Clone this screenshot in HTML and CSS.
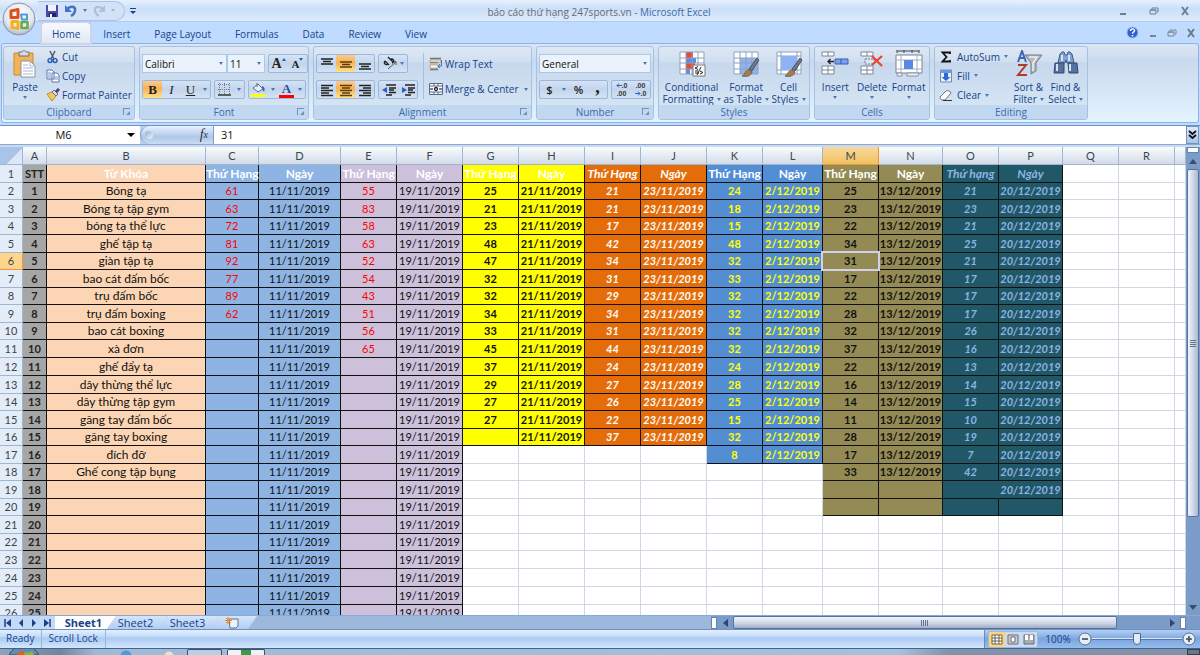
FILE: index.html
```html
<!DOCTYPE html>
<html lang="vi">
<head>
    <meta charset="UTF-8">
    <meta name="viewport" content="width=device-width, initial-scale=1.0">
    <title>báo cáo thứ hạng 247sports.vn - Microsoft Excel</title>
    <link rel="stylesheet" href="styles.css">
</head>
<body>
    <header class="titlebar">
        <button class="office" aria-label="Office Button">
            <svg width="34" height="34" viewBox="0 0 34 34">
                <defs>
                    <radialGradient id="orb" cx="50%" cy="35%" r="65%">
                        <stop offset="0" stop-color="#fff"/>
                        <stop offset=".7" stop-color="#e3e7ef"/>
                        <stop offset="1" stop-color="#a9b4c6"/>
                    </radialGradient>
                </defs>
                <circle cx="17" cy="17" r="16" fill="url(#orb)" stroke="#8793a8"/>
                <g fill="none" stroke-width="3" stroke-linejoin="round">
                    <path d="M16 15.500h-7V9l7-1.500z" stroke="#e0501c"/>
                    <path d="M19 12.500h6v5h-5z" stroke="#4f9be0" stroke-width="2"/>
                    <path d="M10 19.500h6v7l-6-1z" stroke="#f5ae1e"/>
                    <path d="M19.500 20h6v6h-6z" stroke="#6aa84a" stroke-width="2.500"/>
                </g>
            </svg>
        </button>
        <div class="quick">
            <button aria-label="Save">
                <svg width="14" height="14" viewBox="0 0 14 14">
                    <path d="M1 1h12v12H1z" fill="#4a48b0"/>
                    <path d="M3 1h8v6H3z" fill="#eef3ff"/>
                    <path d="M4 9h7v4H4z" fill="#23226e"/>
                    <path d="M5 10h2v3H5z" fill="#fff"/>
                </svg>
            </button>
            <button aria-label="Undo">
                <svg width="14" height="14" viewBox="0 0 14 14">
                    <path d="M3 5c5-4 9-2 8 2-.4 2-2 4-4 5" fill="none" stroke="#4472c8" stroke-width="2.400"/>
                    <path d="M1 1v7h7z" fill="#4472c8"/>
                </svg>
            </button>
            <i class="arrow"></i>
            <button aria-label="Redo">
                <svg width="14" height="14" viewBox="0 0 14 14">
                    <path d="M11 5C6 1 2 3 3 7c.4 2 2 4 4 5" fill="none" stroke="#b3c0d4" stroke-width="2.200"/>
                    <path d="M13 1v7H6z" fill="#b3c0d4"/>
                </svg>
            </button>
            <i class="arrow dim"></i>
        </div>
        <button class="customize" aria-label="Customize Quick Access Toolbar"><i class="arrow dark"></i></button>
        <h1><span>báo cáo thứ hạng 247sports.vn</span> - Microsoft Excel</h1>
        <div class="window-buttons">
            <button aria-label="Minimize"><svg width="10" height="10"><path d="M2 8h6" stroke="#6b7f9c" stroke-width="2"/></svg></button>
            <button aria-label="Restore"><svg width="10" height="10"><path d="M3 3V2h6v4H8M1 4h6v4H1zM1 4h6" fill="none" stroke="#6b7f9c"/></svg></button>
            <button aria-label="Close"><svg width="10" height="10"><path d="M2 1l6 8M8 1L2 9" stroke="#6b7f9c" stroke-width="2"/></svg></button>
        </div>
    </header>

    <nav class="tabs">
        <a class="active" href="#home">Home</a>
        <a href="#insert">Insert</a>
        <a href="#layout">Page Layout</a>
        <a href="#formulas">Formulas</a>
        <a href="#data">Data</a>
        <a href="#review">Review</a>
        <a href="#view">View</a>
        <div class="doc-buttons">
            <button aria-label="Help">
                <svg width="13" height="13" viewBox="0 0 13 13">
                    <circle cx="6.5" cy="6.5" r="5.5" fill="#2f62cf" stroke="#9dbcf2"/>
                    <path d="M4.500 5c0-3 4-2.500 4-.3 0 1.300-2 1.300-2 3M6.500 9v1.500" fill="none" stroke="#fff" stroke-width="1.400"/>
                </svg>
            </button>
            <button aria-label="Minimize workbook"><svg width="10" height="10"><path d="M2 8h6" stroke="#7b8490" stroke-width="2"/></svg></button>
            <button aria-label="Restore workbook"><svg width="10" height="10"><path d="M3 3V2h6v4H8M1 4h6v4H1zM1 4h6" fill="none" stroke="#7b8490"/></svg></button>
            <button aria-label="Close workbook"><svg width="10" height="10"><path d="M2 1l6 8M8 1L2 9" stroke="#6f7883" stroke-width="2"/></svg></button>
        </div>
    </nav>

    <div class="ribbon">
        <section class="group clipboard">
            <div class="tools">
                <button class="big">
                    <svg width="26" height="28" viewBox="0 0 26 28">
                        <path d="M2 3h19v22H2z" fill="#f0b455" stroke="#c98a2b"/>
                        <path d="M7 2h3c1-2 3-2 4 0h3v4H7z" fill="#d7d9dc" stroke="#6d7078"/>
                        <path d="M9 11h9l5 5v11H9z" fill="#fff" stroke="#8a94a8"/>
                        <path d="M18 11v5h5M11 15h5M11 18h10M11 21h10M11 24h10" fill="none" stroke="#a9b8d4"/>
                    </svg>
                    <span>Paste</span><i class="arrow"></i>
                </button>
                <div class="stack">
                    <button>
                        <svg width="14" height="14" viewBox="0 0 14 14">
                            <path d="M4 1l4 8M9 1L5 9" stroke="#4c5a70" stroke-width="1.500"/>
                            <path d="M4 8.500a2 2 0 1 0 .1 0M9 8.500a2 2 0 1 0 .1 0" fill="none" stroke="#2b5fb8" stroke-width="1.600"/>
                        </svg>Cut
                    </button>
                    <button>
                        <svg width="14" height="14" viewBox="0 0 14 14">
                            <path d="M1 1h5l2 2v7H1zM6 4h5l2 2v7H6z" fill="#fff" stroke="#5a78ad"/>
                            <path d="M2 4h3M2 6h3M2 8h3M8 8h4M8 10h4" stroke="#6d93d6"/>
                        </svg>Copy
                    </button>
                    <button>
                        <svg width="14" height="14" viewBox="0 0 14 14">
                            <path d="M1 6l5-2 4 4-4 5z" fill="#f3c85c" stroke="#b98b2c"/>
                            <path d="M6 4l2-2 4 4-2 2z" fill="#d9dde4" stroke="#687080"/>
                            <path d="M10 4l3-3" stroke="#50407c" stroke-width="3"/>
                        </svg>Format Painter
                    </button>
                </div>
            </div>
            <h2>Clipboard<i class="launch"></i></h2>
        </section>

        <section class="group font">
            <div class="tools rows">
                <div class="row">
                    <div class="combos">
                        <div class="combo font-name"><select aria-label="Font"><option>Calibri</option></select></div>
                        <div class="combo font-size"><select aria-label="Font size"><option>11</option></select></div>
                    </div>
                    <div class="set">
                        <button class="glyph grow" aria-label="Increase font size">A<i class="mark up"></i></button>
                        <button class="glyph shrink" aria-label="Decrease font size">A<i class="mark"></i></button>
                    </div>
                </div>
                <div class="row">
                    <div class="set">
                        <button class="glyph on"><b>B</b></button>
                        <button class="glyph"><em>I</em></button>
                        <button class="glyph"><u>U</u></button>
                        <button class="drop" aria-label="Underline options"><i class="arrow"></i></button>
                    </div>
                    <div class="set">
                        <button aria-label="Borders">
                            <svg width="13" height="13" viewBox="0 0 13 13"><path d="M1.500 0v12M6.500 0v12M11.500 0v12M0 1.500h12M0 6.500h12" fill="none" stroke="#6f7c92" stroke-dasharray="1 1"/><path d="M0 12h13" stroke="#333" stroke-width="1.500"/></svg>
                        </button>
                        <button class="drop" aria-label="Border options"><i class="arrow"></i></button>
                    </div>
                    <div class="set">
                        <button aria-label="Fill color">
                            <svg width="15" height="15" viewBox="0 0 15 15"><path d="M2 6l5-4 5 5-5 3z" fill="#e8edf5" stroke="#5d6f8d"/><path d="M6 5V1" stroke="#5d6f8d"/><path d="M11 4c3 1 3 3 2 6l-2-3z" fill="#3867b8"/><path d="M0 12h14v3H0z" fill="#ff0"/></svg>
                        </button>
                        <button class="drop" aria-label="Fill color options"><i class="arrow"></i></button>
                        <button class="glyph color" aria-label="Font color">A</button>
                        <button class="drop" aria-label="Font color options"><i class="arrow"></i></button>
                    </div>
                </div>
            </div>
            <h2>Font<i class="launch"></i></h2>
        </section>

        <section class="group alignment">
            <div class="tools">
                <div class="rows">
                    <div class="row">
                        <div class="set">
                            <button aria-label="Top align"><svg width="14" height="14"><path d="M1 2h12M3 4.500h8M1 7h12" stroke="#222" stroke-width="1.500"/></svg></button>
                            <button class="on" aria-label="Middle align"><svg width="14" height="14"><path d="M1 5h12M3 7.500h8M1 10h12" stroke="#5b3c08" stroke-width="1.500"/></svg></button>
                            <button aria-label="Bottom align"><svg width="14" height="14"><path d="M1 7h12M3 9.500h8M1 12h12" stroke="#222" stroke-width="1.500"/></svg></button>
                        </div>
                        <div class="set">
                            <button class="wide" aria-label="Orientation">
                                <svg width="15" height="15" viewBox="0 0 15 15"><path d="M5 13l8-7M10 6l3-.5V9" fill="none" stroke="#555"/><path d="M2 5a2 2 0 1 0 3 3M2 5l4 4M5 1l5 5M7 4a2 2 0 1 1 2 3" fill="none" stroke="#222" stroke-width="1.400"/></svg>
                                <i class="arrow"></i>
                            </button>
                        </div>
                    </div>
                    <div class="row">
                        <div class="set">
                            <button aria-label="Align left"><svg width="14" height="14"><path d="M1 2.500h12M1 5h8M1 7.500h12M1 10h8M1 12.500h12" stroke="#222" stroke-width="1.400"/></svg></button>
                            <button class="on" aria-label="Center"><svg width="14" height="14"><path d="M1 2.500h12M3 5h8M1 7.500h12M3 10h8M1 12.500h12" stroke="#5b3c08" stroke-width="1.400"/></svg></button>
                            <button aria-label="Align right"><svg width="14" height="14"><path d="M1 2.500h12M5 5h8M1 7.500h12M5 10h8M1 12.500h12" stroke="#222" stroke-width="1.400"/></svg></button>
                        </div>
                        <div class="set">
                            <button aria-label="Decrease indent"><svg width="14" height="14"><path d="M4 2h10M7 5h7M7 7h5M7 9.500h7M4 12h6" stroke="#222" stroke-width="1.500"/><path d="M5 4v6L0 7z" fill="#2f5fc4"/></svg></button>
                            <button aria-label="Increase indent"><svg width="14" height="14"><path d="M4 2h10M7 5h7M7 7h5M7 9.500h7M4 12h6" stroke="#222" stroke-width="1.500"/><path d="M1 4v6l5-3z" fill="#2f5fc4"/></svg></button>
                        </div>
                    </div>
                </div>
                <div class="wrap">
                    <button>
                        <svg width="14" height="14" viewBox="0 0 14 14"><path d="M1 1.500h11M1 5.500h8M1 12.500h8" stroke="#6a7890" stroke-width="1.600"/><path d="M1 3h11v2H1zM1 8h8v3H1z" fill="#fff" stroke="#b48a5a" stroke-width=".8"/><path d="M12.500 3v6h-3M11 7L9 9l2 2" fill="none" stroke="#4673bd"/></svg>Wrap Text
                    </button>
                    <button>
                        <svg width="14" height="14" viewBox="0 0 14 14"><path d="M.5 1.500h13v11H.5z" fill="#fff" stroke="#5b6b84"/><path d="M0 4h14M0 10h14M5 1v3M9 1v3M5 10v3M9 10v3" stroke="#5b6b84"/><path d="M1 7h3M10 7h3" stroke="#2f5fc4" stroke-width="1.500"/><circle cx="7" cy="7" r="1.500" fill="none" stroke="#222" stroke-width="1.300"/></svg>Merge &amp; Center<i class="arrow"></i>
                    </button>
                </div>
            </div>
            <h2>Alignment<i class="launch"></i></h2>
        </section>

        <section class="group number">
            <div class="tools rows">
                <div class="combo"><select aria-label="Number format"><option>General</option></select></div>
                <div class="row">
                    <div class="set">
                        <button class="glyph sans">$</button>
                        <button class="drop" aria-label="Accounting formats"><i class="arrow"></i></button>
                        <button class="glyph sans">%</button>
                        <button class="glyph comma" aria-label="Comma style">,</button>
                    </div>
                    <div class="set">
                        <button class="decimal" aria-label="Increase decimal">
                            <span><svg width="6" height="5"><path d="M6 2.500H1M3 .5l-2 2 2 2" fill="none" stroke="#2f5fc4"/></svg>.0</span><span>.00</span>
                        </button>
                        <button class="decimal" aria-label="Decrease decimal">
                            <span>.00</span><span><svg width="6" height="5"><path d="M0 2.500h5M3 .5l2 2-2 2" fill="none" stroke="#2f5fc4"/></svg>.0</span>
                        </button>
                    </div>
                </div>
            </div>
            <h2>Number<i class="launch"></i></h2>
        </section>

        <section class="group styles">
            <div class="tools">
                <button class="big">
                    <svg width="28" height="28" viewBox="0 0 28 28"><path d="M2 2h24v22H2z" fill="#fff"/><path d="M8 2h7v6H8zM8 13h9v6H8z" fill="#e8492f"/><path d="M8 8h10v5H8zM8 19h4v5H8z" fill="#5a8ae6"/><path d="M2 2h24v22H2zM2 8h24M2 13h24M2 19h24M8 2v22M14 2v22M20 2v22" fill="none" stroke="#8fa1bd"/><path d="M15 15h12v11H15z" fill="#fff" stroke="#777"/><path d="M20 16.500l-3 1.500 3 1.500M17 21h3M17 23h4M19 25l4-8M22 21l3 1.500-3 1.500" fill="none" stroke="#222"/></svg>
                    <span>Conditional</span><span>Formatting<i class="arrow"></i></span>
                </button>
                <button class="big">
                    <svg width="28" height="28" viewBox="0 0 28 28"><path d="M2 2h24v22H2z" fill="#fff"/><path d="M8 8h18v16H8z" fill="#8fb2f0"/><path d="M2 2h24v22H2zM2 8h24M2 13h24M2 19h24M8 2v22M14 2v22M20 2v22" fill="none" stroke="#8fa1bd"/><path d="M17 19l8-11 2 2-7 11z" fill="#707784" stroke="#4c5462"/><path d="M10 26c3-1 3-6 7-6l3 2c-1 4-5 5-10 4z" fill="#b87a2c" stroke="#53657f"/></svg>
                    <span>Format</span><span>as Table<i class="arrow"></i></span>
                </button>
                <button class="big">
                    <svg width="28" height="28" viewBox="0 0 28 28"><path d="M2 2h24v22H2z" fill="#fff" stroke="#8fa1bd"/><path d="M2 6h24M2 20h24M6 2v22M22 2v22" stroke="#8fa1bd"/><path d="M6 6h16v14H6z" fill="#8fb2f7"/><path d="M17 19l8-11 2 2-7 11z" fill="#707784" stroke="#4c5462"/><path d="M10 26c3-1 3-6 7-6l3 2c-1 4-5 5-10 4z" fill="#b87a2c" stroke="#53657f"/></svg>
                    <span>Cell</span><span>Styles<i class="arrow"></i></span>
                </button>
            </div>
            <h2>Styles</h2>
        </section>

        <section class="group cells">
            <div class="tools">
                <button class="big">
                    <svg width="28" height="28" viewBox="0 0 28 28"><path d="M1 2h12v4H1zM7 2v4M1 16h12v8H1zM1 20h12M7 16v8" fill="#fff" stroke="#7d8797"/><path d="M14 9h13v5H14z" fill="#7aa2ee" stroke="#3d5fa8"/><path d="M20 9v5" stroke="#3d5fa8"/><path d="M13 11.500H7M9.500 9L7 11.500 9.500 14" fill="none" stroke="#222" stroke-width="1.300"/></svg>
                    <span>Insert</span><i class="arrow"></i>
                </button>
                <button class="big">
                    <svg width="28" height="28" viewBox="0 0 28 28"><path d="M3 2h12v4H3zM9 2v4M3 16h12v8H3zM3 20h12M9 16v8" fill="#fff" stroke="#7d8797"/><path d="M7 9h9v5H7z" fill="#dbe6fa" stroke="#6c7c96" stroke-dasharray="2 1"/><path d="M14 6l10 10M24 6L14 15" stroke="#e8452c" stroke-width="2.200"/></svg>
                    <span>Delete</span><i class="arrow"></i>
                </button>
                <button class="big">
                    <svg width="28" height="28" viewBox="0 0 28 28"><path d="M2 1h22M2 0v3M9 0v3M17 0v3M24 0v3" stroke="#444"/><path d="M1 5h26v18H1z" fill="#fff" stroke="#77839a"/><path d="M6 5v18M22 5v18M1 10h26M1 19h26" stroke="#a3afc4"/><path d="M9 10h9v9H9z" fill="#5a88e2"/><path d="M2 23h5v3H2zM12 23h12l-1 3H12z" fill="#eef2f8" stroke="#8791a3"/></svg>
                    <span>Format</span><i class="arrow"></i>
                </button>
            </div>
            <h2>Cells</h2>
        </section>

        <section class="group editing">
            <div class="tools">
                <div class="stack">
                    <button>
                        <svg width="14" height="14" viewBox="0 0 14 14"><path d="M11 4V2.500H3.500L7.500 7l-4 4.500H11V10" fill="none" stroke="#111" stroke-width="1.800"/></svg>AutoSum<i class="arrow"></i>
                    </button>
                    <button>
                        <svg width="14" height="14" viewBox="0 0 14 14"><path d="M1.500 1h11v12h-11z" fill="#e9f0fb" stroke="#6b8bbd"/><path d="M1.500 1h11v3h-11z" fill="#6c98e4"/><path d="M5 4h4v4h2.500L7 12 2.500 8H5z" fill="#2f66d6"/></svg>Fill<i class="arrow"></i>
                    </button>
                    <button>
                        <svg width="14" height="14" viewBox="0 0 14 14"><path d="M1 9l6-6c1-1 5 0 5 2l-6 7H4c-2 0-3-1-3-3z" fill="#fff" stroke="#6a7384"/><path d="M4 12.500h9" stroke="#333"/></svg>Clear<i class="arrow"></i>
                    </button>
                </div>
                <button class="big">
                    <svg width="28" height="28" viewBox="0 0 28 28"><path d="M10 5h17l-6 8v8l-5 3V13z" fill="#b5b8be" stroke="#777b84"/><path d="M14 7h8l-4 6v8" fill="none" stroke="#eceef1" stroke-width="1.500"/><path d="M3 12L7 1l4 11M4 8h6" fill="none" stroke="#3c67b8" stroke-width="2"/><path d="M3 15h8L3 25h9" fill="none" stroke="#b0392c" stroke-width="2"/></svg>
                    <span>Sort &amp;</span><span>Filter<i class="arrow"></i></span>
                </button>
                <button class="big">
                    <svg width="28" height="28" viewBox="0 0 28 28"><path d="M8 4l2-2h2l1 3h2l1-3h2l2 2 2 9h-7l-1-3-1 3H6z" fill="#7f9fd0" stroke="#40598a"/><path d="M3 13h9v10H2zM16 13h9l1 10h-9z" fill="#54719f" stroke="#33496f"/><path d="M5 14v7M18 14v7M10 5v6M17 5v6" stroke="#d5e2f5" stroke-width="2"/></svg>
                    <span>Find &amp;</span><span>Select<i class="arrow"></i></span>
                </button>
            </div>
            <h2>Editing</h2>
        </section>
    </div>

    <div class="formula-bar">
        <div class="name-box">
            <input type="text" value="M6" aria-label="Name box">
            <i class="arrow black"></i>
        </div>
        <div class="fx"><i class="knob"></i><button aria-label="Insert function"><em>f</em><sub>x</sub></button></div>
        <input class="formula" type="text" value="31" aria-label="Formula">
        <button class="expand" aria-label="Expand formula bar">
            <svg width="9" height="10"><path d="M1 1l3.500 3L8 1M1 5l3.500 3L8 5" fill="none" stroke="#111" stroke-width="1.800"/></svg>
        </button>
    </div>

    <main class="workbook">
        <div class="sheet">
            <table>
                <colgroup>
                    <col class="w-head"><col class="w-a"><col class="w-b"><col class="w-c"><col class="w-d">
                    <col class="w-rank"><col class="w-date"><col class="w-rank"><col class="w-date">
                    <col class="w-rank"><col class="w-date"><col class="w-rank"><col class="w-l">
                    <col class="w-rank"><col class="w-n"><col class="w-rank"><col class="w-n">
                    <col class="w-rank"><col class="w-rank"><col>
                </colgroup>
                <thead><tr id="letters"><th class="corner" aria-label="Select all"></th></tr></thead>
                <tbody id="rows"></tbody>
            </table>
        </div>
        <div class="vscroll">
            <i class="split"></i>
            <button aria-label="Scroll up"><svg width="8" height="5"><path d="M0 5l4-5 4 5z" fill="#3c4d6c"/></svg></button>
            <div class="thumb"><i></i></div>
            <button class="down" aria-label="Scroll down"><svg width="8" height="5"><path d="M0 0l4 5 4-5z" fill="#3c4d6c"/></svg></button>
        </div>
    </main>

    <div class="sheet-bar">
        <div class="sheet-nav">
            <button aria-label="First sheet"><svg width="8" height="8"><path d="M1 0v8" stroke="#1d3f86" stroke-width="1.500"/><path d="M7 0v8L2 4z" fill="#1d3f86"/></svg></button>
            <button aria-label="Previous sheet"><svg width="8" height="8"><path d="M6 0v8L2 4z" fill="#1d3f86"/></svg></button>
            <button aria-label="Next sheet"><svg width="8" height="8"><path d="M2 0v8l4-4z" fill="#1d3f86"/></svg></button>
            <button aria-label="Last sheet"><svg width="8" height="8"><path d="M7 0v8" stroke="#1d3f86" stroke-width="1.500"/><path d="M1 0v8l5-4z" fill="#1d3f86"/></svg></button>
        </div>
        <div class="sheet-tabs">
            <button class="current">Sheet1</button>
            <button>Sheet2</button>
            <button>Sheet3</button>
            <button class="new" aria-label="Insert worksheet">
                <svg width="14" height="12" viewBox="0 0 14 12"><path d="M4 2h9v7l-2 2H5z" fill="#eef3fb" stroke="#5f7290"/><path d="M3 0v7M0 3.500h7M1 1l5 5M6 1L1 6" stroke="#e08a1e"/></svg>
            </button>
        </div>
        <div class="hscroll">
            <i class="split"></i>
            <button aria-label="Scroll left"><svg width="5" height="8"><path d="M5 0v8L0 4z" fill="#2f4470"/></svg></button>
            <div class="track"><div class="thumb"><i></i></div></div>
            <button aria-label="Scroll right"><svg width="5" height="8"><path d="M0 0v8l5-4z" fill="#2f4470"/></svg></button>
            <i class="split"></i>
        </div>
    </div>

    <footer class="status">
        <span class="ready">Ready</span>
        <span class="lock">Scroll Lock</span>
        <div class="view-tools">
            <div class="views">
                <button class="on" aria-label="Normal view"><svg width="12" height="11"><path d="M1 1h10v9H1zM1 4h10M1 7h10M4 1v9M8 1v9" fill="#fff" stroke="#6b6350"/></svg></button>
                <button aria-label="Page layout view"><svg width="12" height="11"><path d="M1 1h10v9H1z" fill="#c9ccd0" stroke="#6b6f76"/><path d="M4 3h4v5H4z" fill="#fff" stroke="#6b6f76"/></svg></button>
                <button aria-label="Page break view"><svg width="12" height="11"><path d="M1 1h10v9H1z" fill="#a9adb3" stroke="#6b6f76"/><path d="M2 1h3v5H2zM7 1h3v5H7z" fill="#fff"/></svg></button>
            </div>
            <button class="percent">100%</button>
            <button class="round" aria-label="Zoom out"><svg width="14" height="14"><circle cx="7" cy="7" r="6" fill="#e6edf7" stroke="#5c6f8e"/><path d="M4 7h6" stroke="#3d4c66" stroke-width="1.600"/></svg></button>
            <input type="range" min="0" max="100" value="50" aria-label="Zoom">
            <button class="round" aria-label="Zoom in"><svg width="14" height="14"><circle cx="7" cy="7" r="6" fill="#e6edf7" stroke="#5c6f8e"/><path d="M4 7h6M7 4v6" stroke="#3d4c66" stroke-width="1.600"/></svg></button>
        </div>
    </footer>

    <div class="taskbar">
        <button class="start" aria-label="Start">
            <svg width="30" height="6" viewBox="0 0 30 6"><path d="M0 6C3 0 8-3 15-3S27 0 30 6z" fill="#5f8fae" stroke="#2e4b66"/><path d="M8 6c2-4 5-5 8-3l-1 3z" fill="#e65c2a"/><path d="M16 3c2 1 4 1 7-1l2 4H15z" fill="#86b93d"/></svg>
        </button>
        <span class="pinned"></span>
        <button class="task" aria-label="Explorer"></button>
        <button class="task excel" aria-label="Excel"></button>
        <span class="tray"></span>
        <span class="desktop"></span>
    </div>

    <script>
        const rowCount = 26;
        const repeat = (text, n) => Array(n).fill(text);

        // last = last filled row, values start at row 2
        const columns = [
            { letter: 'A', style: 'stt', title: 'STT', last: 26, values: Array.from({ length: 25 }, (_, i) => i + 1) },
            { letter: 'B', style: 'keyword', title: 'Từ Khóa', last: 26, values: [
                'Bóng tạ', 'Bóng tạ tập gym', 'bóng tạ thể lực', 'ghế tập tạ', 'giàn tập tạ', 'bao cát đấm bốc',
                'trụ đấm bốc', 'trụ đấm boxing', 'bao cát boxing', 'xà đơn', 'ghế đẩy tạ', 'dây thừng thể lực',
                'dây thừng tập gym', 'găng tay đấm bốc', 'găng tay boxing', 'đích đỡ', 'Ghế cong tập bụng'] },
            { letter: 'C', style: 'blue rank', title: 'Thứ Hạng', last: 26, values: [61, 63, 72, 81, 92, 77, 89, 62] },
            { letter: 'D', style: 'blue', title: 'Ngày', last: 26, values: repeat('11/11/2019', 25) },
            { letter: 'E', style: 'violet rank', title: 'Thứ Hạng', last: 26, values: [55, 83, 58, 63, 52, 54, 43, 51, 56, 65] },
            { letter: 'F', style: 'violet', title: 'Ngày', last: 26, values: repeat('19/11/2019', 25) },
            { letter: 'G', style: 'yellow', title: 'Thứ Hạng', last: 16, values: [25, 21, 23, 48, 47, 32, 32, 34, 33, 45, 37, 29, 27, 27] },
            { letter: 'H', style: 'yellow', title: 'Ngày', last: 16, values: repeat('21/11/2019', 15) },
            { letter: 'I', style: 'orange', title: 'Thứ Hạng', last: 16, values: [21, 21, 17, 42, 34, 31, 29, 34, 31, 44, 24, 27, 26, 22, 37] },
            { letter: 'J', style: 'orange', title: 'Ngày', last: 16, values: repeat('23/11/2019', 15) },
            { letter: 'K', style: 'royal', title: 'Thứ Hạng', last: 17, values: [24, 18, 15, 48, 32, 33, 32, 32, 32, 32, 24, 28, 25, 15, 32, 8] },
            { letter: 'L', style: 'royal', title: 'Ngày', last: 17, values: repeat('2/12/2019', 16) },
            { letter: 'M', style: 'olive', title: 'Thứ Hạng', last: 20, values: [25, 23, 22, 34, 31, 17, 22, 28, 32, 37, 22, 16, 14, 11, 28, 17, 33] },
            { letter: 'N', style: 'olive', title: 'Ngày', last: 20, values: repeat('13/12/2019', 17) },
            { letter: 'O', style: 'teal', title: 'Thứ hạng', last: 20, values: [21, 23, 21, 25, 21, 17, 17, 17, 26, 16, 13, 14, 15, 10, 19, 7, 42] },
            { letter: 'P', style: 'teal', title: 'Ngày', last: 20, values: repeat('20/12/2019', 18) },
            { letter: 'Q' }, { letter: 'R' }, { letter: '' }
        ];
        const active = { letter: 'M', row: 6 };

        const letters = document.getElementById('letters');
        columns.forEach(col => {
            const th = document.createElement('th');
            th.textContent = col.letter;
            if (col.letter === active.letter) th.className = 'selected';
            letters.appendChild(th);
        });

        const body = document.getElementById('rows');
        for (let row = 1; row <= rowCount; row++) {
            const tr = body.insertRow();
            const th = document.createElement('th');
            th.textContent = row;
            if (row === active.row) th.className = 'selected';
            tr.appendChild(th);

            columns.forEach(col => {
                const td = tr.insertCell();
                if (!col.style || row > col.last) return;
                td.className = 'fill ' + col.style;
                if (row === 1) td.classList.add('title');
                if (col.letter === active.letter && row === active.row) td.classList.add('active');
                if (col.letter === 'O' && row === 19) td.classList.add('open');
                const value = row === 1 ? col.title : col.values[row - 2];
                if (value !== undefined) td.textContent = value;
            });
        }
    </script>
</body>
</html>
```

FILE: styles.css
```css
* {
    box-sizing: border-box;
}
body {
    margin: 0;
    height: 100vh;
    display: flex;
    flex-direction: column;
    overflow: hidden;
    background: #bfdbff;
    font-family: "Open Sans", "Noto Sans", sans-serif;
    font-size: 10px;
    line-height: 12px;
    color: #15428b;
}
button {
    display: flex;
    align-items: center;
    justify-content: center;
    margin: 0;
    padding: 0;
    border: 0;
    background: none;
    color: inherit;
    font: inherit;
    white-space: nowrap;
}
h1, h2 {
    margin: 0;
    font-size: 10px;
    font-weight: normal;
}
svg {
    display: block;
    flex: none;
}
.arrow {
    display: inline-block;
    flex: none;
    border: 2px solid transparent;
    border-top: 3px solid #4f76b5;
    border-bottom: 0;
}
.arrow.dim { border-top-color: #a9b9d0; }
.arrow.dark { border-width: 3px 3px 0; border-top-color: #15428b; }
.arrow.black { border-width: 4px 4px 0; border-top-color: #000; }

/* Title bar */
.titlebar {
    position: relative;
    z-index: 1;
    display: flex;
    align-items: center;
    height: 22px;
    flex: none;
    background: linear-gradient(#e6f0fd, #cbdff8 45%, #dfebfb);
    border-bottom: 1px solid #b0cdf2;
}
.office {
    position: absolute;
    left: 2px;
    top: 2px;
}
.quick {
    display: flex;
    align-items: center;
    gap: 5px;
    height: 20px;
    margin-left: 38px;
    padding: 0 9px 0 7px;
    border: 1px solid #a9c4e8;
    border-left: 0;
    border-radius: 0 10px 10px 0;
    background: #d3e3f7;
}
.customize {
    margin-left: 5px;
    border-top: 1px solid #15428b;
    padding-top: 2px;
}
.titlebar h1 {
    flex: 1;
    margin-right: 56px;
    padding-top: 2px;
    text-align: center;
    color: #3e6aaa;
}
.titlebar h1 span { color: #696b73; }
.window-buttons {
    display: flex;
    gap: 21px;
    margin-right: 10px;
}

/* Ribbon tabs */
.tabs {
    display: flex;
    flex: none;
    height: 21px;
    padding-left: 41px;
    background: #bfdbff;
}
.tabs a {
    padding: 6px 12px 3px;
    color: #15428b;
    text-decoration: none;
}
.tabs a.active {
    padding: 5px 10px 3px;
    border: 1px solid #8db2e3;
    border-bottom: 0;
    border-radius: 3px 3px 0 0;
    background: linear-gradient(#f5faff, #dfe9f5);
}
.doc-buttons {
    display: flex;
    align-items: center;
    gap: 9px;
    margin-left: auto;
    padding-right: 4px;
}

/* Ribbon */
.ribbon {
    display: flex;
    flex: none;
    gap: 4px;
    height: 80px;
    margin: 0 1px 2px;
    padding: 2px 1px;
    border: 1px solid #8db2e3;
    border-radius: 3px;
    background: linear-gradient(#dbe6f4, #cfddef 18%, #c9d9ed 20%, #e4f3ff);
}
.group {
    display: flex;
    flex-direction: column;
    flex: none;
    border: 1px solid #a6c2e2;
    border-radius: 3px;
    background: linear-gradient(#dee8f5, #d1dfef 20%, #c7d8ed 22%, #d8e8f5);
}
.group h2 {
    position: relative;
    flex: none;
    height: 14px;
    border-radius: 0 0 2px 2px;
    background: #c2d8f0;
    color: #3e6aaa;
    line-height: 14px;
    text-align: center;
}
.launch {
    position: absolute;
    right: 4px;
    top: 3px;
    width: 7px;
    height: 7px;
    border-left: 1px solid #6f8fbd;
    border-top: 1px solid #6f8fbd;
}
.launch::after {
    content: '';
    position: absolute;
    right: 0;
    bottom: 0;
    border: 2px solid #6f8fbd;
    border-left-color: transparent;
    border-top-color: transparent;
}
.clipboard { width: 132px; }
.font { width: 170px; }
.alignment { width: 219px; }
.number { width: 118px; }
.styles { width: 152px; }
.cells { width: 116px; }
.editing { width: 154px; }
.tools {
    display: flex;
    flex: 1;
    min-height: 0;
    padding: 0 2px;
}
.big {
    flex-direction: column;
    justify-content: flex-start;
    padding-top: 3px;
}
.big svg { margin-bottom: 3px; }
.big > .arrow { margin-top: 3px; }
.big span .arrow {
    margin-left: 3px;
    vertical-align: 2px;
}
.clipboard .big { width: 38px; }
.styles .big { flex: 1 1 auto; }
.cells .big { flex: 1; }
.editing .big { width: 37px; }
.stack {
    display: flex;
    flex-direction: column;
    justify-content: space-around;
    padding-left: 2px;
}
.stack button, .wrap button {
    justify-content: flex-start;
    gap: 2px;
}
.wrap .arrow { margin-left: 3px; }
.editing .stack {
    width: 73px;
    padding-left: 2px;
}
.editing .stack button { gap: 4px; }
.rows {
    display: flex;
    flex-direction: column;
    gap: 7px;
    padding-top: 7px;
}
.row {
    display: flex;
    gap: 3px;
}
.set {
    display: flex;
    height: 19px;
    border: 1px solid #9bb7dd;
    border-radius: 2px;
    background: linear-gradient(#d5e3f4, #c3d5ec 50%, #d3e3f4);
}
.set button { width: 19px; }
.set .drop { width: 10px; }
.set .wide {
    width: 28px;
    gap: 2px;
}
.set .on { background: linear-gradient(#fbc98c, #f9b154 45%, #fde38f); }
.combos { display: flex; }
.combo {
    position: relative;
    height: 19px;
}
.combo::after {
    content: '';
    position: absolute;
    right: 4px;
    top: 8px;
    border: 2px solid transparent;
    border-top: 3px solid #4f76b5;
    border-bottom: 0;
}
.combo select {
    width: 100%;
    height: 19px;
    padding: 0 2px;
    border: 1px solid #abc7ec;
    border-radius: 0;
    background: #eaf2fb;
    color: #111;
    font: inherit;
    appearance: none;
}
.font-name { width: 85px; }
.font-size { width: 38px; }
.glyph {
    font-family: "Liberation Serif", serif;
    font-size: 13px;
    color: #222;
}
.glyph.sans {
    font-family: "Open Sans", sans-serif;
    font-size: 11px;
    font-weight: 600;
}
.glyph.comma {
    padding-bottom: 6px;
    font-size: 18px;
    font-weight: bold;
}
.glyph.grow { font-size: 14px; font-weight: bold; }
.glyph.shrink { font-size: 11px; font-weight: bold; }
.mark {
    align-self: flex-start;
    margin-top: 3px;
    border: 2px solid transparent;
    border-top: 3px solid #2d5fae;
    border-bottom: 0;
}
.mark.up {
    border-top: 0;
    border-bottom: 3px solid #2d5fae;
}
.glyph.color {
    height: 16px;
    margin: 1px 1px 0;
    width: 15px;
    border-bottom: 3px solid #f00;
    color: #2d4f96;
    font-weight: bold;
}
.set .decimal {
    flex-direction: column;
    font-family: "Liberation Sans", sans-serif;
    font-size: 7px;
    font-weight: bold;
    line-height: 8px;
    color: #333;
}
.decimal span {
    display: flex;
    align-items: center;
}
.wrap {
    display: flex;
    flex-direction: column;
    gap: 11px;
    margin: 6px 0 6px 5px;
    padding: 4px 0 0 5px;
    border-left: 1px solid #a4bfe0;
}

/* Formula bar */
.formula-bar {
    display: flex;
    flex: none;
    height: 20px;
    border-top: 1px solid #6f94c4;
    border-bottom: 1px solid #8ba9ce;
    background: #b9d0ee;
}
.formula-bar input {
    min-width: 0;
    padding: 0;
    border: 0;
    background: #fff;
    color: #111;
    font: inherit;
    font-size: 11px;
}
.name-box {
    display: flex;
    align-items: center;
    width: 140px;
    padding-right: 5px;
    background: #fff;
}
.name-box input {
    flex: 1;
    text-align: center;
}
.fx {
    display: flex;
    align-items: center;
    justify-content: space-between;
    width: 74px;
    padding: 0 5px 0 4px;
    border: 1px solid #7f9fcb;
    border-width: 0 1px 0 1px;
    border-radius: 9px 0 0 9px;
    background: linear-gradient(#e9f1fc, #aec8ea 60%, #c9dcf4);
}
.knob {
    width: 8px;
    height: 8px;
    border-radius: 50%;
    background: linear-gradient(135deg, #92a8c8, #f2f7ff);
}
.fx button {
    font-family: "Liberation Serif", serif;
    font-size: 14px;
    color: #333;
}
.fx sub {
    font-size: 10px;
    font-style: italic;
}
.formula-bar .formula {
    flex: 1;
    padding-left: 7px;
}
.expand {
    width: 13px;
    margin-right: 1px;
    border: 1px solid #6f94c4;
    background: linear-gradient(#dce9fa, #a9c4e8);
}

/* Sheet */
.workbook {
    display: flex;
    flex: 1;
    min-height: 0;
    padding-top: 2px;
    background: #c9dbf1;
}
.sheet {
    flex: 1;
    min-width: 0;
    overflow: hidden;
    background: #fff;
}
table {
    width: 100%;
    table-layout: fixed;
    border-collapse: separate;
    border-spacing: 0;
    font-family: Lato, "Open Sans", sans-serif;
    font-size: 11px;
    line-height: 16px;
    color: #111;
}
.w-head { width: 23px; }
.w-a { width: 24px; }
.w-b { width: 159px; }
.w-c { width: 53px; }
.w-d { width: 82px; }
.w-rank { width: 56px; }
.w-date { width: 66px; }
.w-l { width: 60px; }
.w-n { width: 64px; }
th, td {
    height: 17px;
    padding: 0;
    border-right: 1px solid #d0d7e5;
    border-bottom: 1px solid #d0d7e5;
    text-align: center;
    white-space: nowrap;
}
tbody tr:nth-child(odd) > *,
tbody tr:nth-child(12n) > * { height: 18px; }
th {
    border-color: #9eb6ce;
    background: #e4ecf7;
    color: #37474f;
    font-weight: normal;
}
thead th {
    height: 18px;
    background: linear-gradient(#f9fcfd, #d3dbe9);
}
thead .corner { background: linear-gradient(135deg, #a9c4e9 60%, #dce8f7 60%); }
th.selected { background: #ffd58d; border-color: #f29536; }
thead th.selected { background: linear-gradient(#f9d99f, #f1c15f); }
.fill {
    border-color: #111;
}
.title {
    font-weight: bold;
    color: #fff;
}
.stt { background: #a6a6a6; font-weight: bold; color: #222; }
.keyword { background: #fcd5b4; }
.keyword, .title:not(.stt) { font-size: 12px; }
.blue { background: #8db4e3; }
.violet { background: #ccc0da; }
.rank:not(.title) { color: #f00; }
.yellow { background: #ff0; font-weight: bold; }
.orange { background: #e46d0a; color: #fff; font-weight: bold; font-style: italic; }
.royal { background: #538ed5; font-weight: bold; }
.royal:not(.title) { color: #ff0; }
.olive { background: #948b54; font-weight: bold; }
.teal, .teal.title { background: #215867; color: #8db4e3; font-weight: bold; font-style: italic; }
.open { border-right-color: #215867; }
.active { position: relative; }
.active::after {
    content: '';
    position: absolute;
    inset: -2px;
    border: 2px solid #d3d1ea;
}

/* Scroll bars */
.vscroll {
    display: flex;
    flex-direction: column;
    width: 14px;
    padding: 0 1px;
    background: #7b9bc8;
}
.vscroll .split {
    height: 6px;
    border: 1px solid #6385b5;
    background: #fff;
}
.vscroll button { height: 16px; }
.vscroll .thumb {
    display: flex;
    align-items: center;
    justify-content: center;
    flex: 1;
    border: 1px solid #54749f;
    border-radius: 2px;
    background: linear-gradient(90deg, #f2f5fa, #c8d3e4 60%, #a9b9d2);
}
.vscroll .thumb i {
    width: 6px;
    height: 7px;
    background: repeating-linear-gradient(#66758f 0 1px, transparent 1px 2px);
}
.vscroll .down {
    height: 16px;
    margin-top: 82px;
}
.sheet-bar {
    display: flex;
    flex: none;
    height: 15px;
    border-top: 1px solid #8aa9d6;
    border-bottom: 1px solid #7390bd;
    background: #9db8dd;
}
.sheet-nav {
    display: flex;
    align-items: center;
    gap: 5px;
    width: 55px;
    padding-left: 4px;
    background: #c3daf7;
}
.sheet-tabs {
    display: flex;
    flex: 1;
    font-size: 11px;
}
.sheet-tabs button {
    width: 61px;
    margin-right: -9px;
    padding-right: 4px;
    clip-path: polygon(9px 0, 100% 0, calc(100% - 9px) 100%, 0 100%);
    background: linear-gradient(#d5e5fa, #b2cdf2);
}
.sheet-tabs .current {
    clip-path: polygon(0 0, 100% 0, calc(100% - 9px) 100%, 0 100%);
    background: #fff;
    font-weight: bold;
}
.sheet-tabs .new { width: 46px; }
.hscroll {
    display: flex;
    align-items: center;
    flex: 0 0 489px;
    background: #7b9bc8;
}
.hscroll .split {
    width: 6px;
    height: 12px;
    border: 1px solid #6385b5;
    background: #fff;
}
.hscroll button {
    width: 16px;
    height: 12px;
}
.hscroll > .split:last-child { margin-right: 14px; }
.track { flex: 1; }
.track .thumb {
    display: flex;
    align-items: center;
    justify-content: center;
    width: 89%;
    height: 13px;
    border: 1px solid #54749f;
    border-radius: 2px;
    background: linear-gradient(#f2f5fa, #c8d3e4 60%, #9eadc6);
}
.track .thumb i {
    width: 7px;
    height: 6px;
    background: repeating-linear-gradient(90deg, #66758f 0 1px, transparent 1px 2px);
}

/* Status bar and taskbar */
.status {
    display: flex;
    flex: none;
    height: 19px;
    line-height: 17px;
    background: linear-gradient(#e3effd, #c4dcf9 35%, #abcaf3 45%, #d3e6fc);
    border-bottom: 1px solid #45628d;
}
.ready, .lock {
    padding: 0 7px 0 6px;
    border-right: 1px solid #96b5de;
}
.view-tools {
    display: flex;
    align-items: center;
    margin-left: auto;
    padding: 0 4px 0 3px;
    width: 216px;
    border-left: 1px solid #6a8cbd;
    background: linear-gradient(#b3d0f6, #7ba5dd 50%, #97bdee);
}
.views {
    display: flex;
    border: 1px solid #9cb9e2;
    background: #c9dbf3;
}
.views button {
    width: 16px;
    height: 15px;
}
.views .on { background: #fbd47c; }
.percent {
    width: 40px;
}
.view-tools input {
    flex: 1;
    min-width: 0;
    height: 14px;
    margin: 0;
    background: linear-gradient(transparent 6px, #dce9fa 6px 7px, #5577a8 7px 8px, transparent 8px);
    appearance: none;
}
.view-tools input::-webkit-slider-thumb {
    width: 8px;
    height: 12px;
    border: 1px solid #506a94;
    border-radius: 1px 1px 4px 4px;
    background: #e1ebf8;
    appearance: none;
}
.taskbar {
    display: flex;
    flex: none;
    height: 6px;
    padding-left: 9px;
    overflow: hidden;
    background: linear-gradient(90deg, #8ca5bf, #70869e 5%, #9dbad6 8%, #a3c0dc 75%, #7f94ab 79%);
}
.pinned {
    width: 148px;
    background: radial-gradient(circle at 87px 7px, #4a9bd8 5px, transparent 6px), radial-gradient(circle at 130px 7px, #e6e3d4 4px, transparent 5px);
}
.start { width: 30px; }
.task {
    width: 35px;
    margin-right: 5px;
    border: 1px solid #3f5064;
    border-bottom: 0;
    border-radius: 2px 2px 0 0;
    background: #b9cfe4;
}
.task.excel {
    width: 38px;
    background: linear-gradient(90deg, #eef3f8 13px, #3a9c46 13px 23px, #eef3f8 23px);
}
.tray { flex: 1; }
.desktop {
    width: 13px;
    border: 1px solid #333f4d;
    background: #66788c;
}
```
